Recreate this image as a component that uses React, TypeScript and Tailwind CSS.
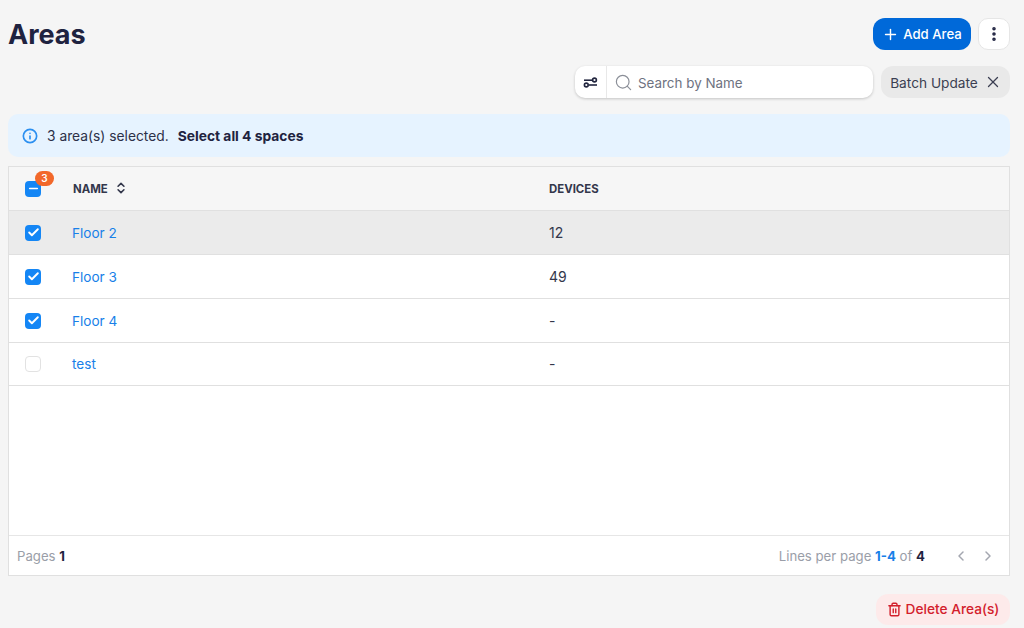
import { ChevronLeft, ChevronRight, ChevronsUpDown, Check, EllipsisVertical, Info, Minus, Plus, Search, Trash2, X } from 'lucide-react';

const rows = [
  { name: 'Floor 2', devices: '12', checked: true, hover: true, last: false },
  { name: 'Floor 3', devices: '49', checked: true, hover: false, last: false },
  { name: 'Floor 4', devices: '-', checked: true, hover: false, last: false },
  { name: 'test', devices: '-', checked: false, hover: false, last: true },
];

function Box({ checked }: { checked: boolean }) {
  if (!checked) {
    return <div className="w-4 h-4 rounded-[4px] border border-[#e2e2e2] bg-white" />;
  }
  return (
    <div className="w-4 h-4 rounded-[4px] bg-[#1486f5] flex items-center justify-center">
      <Check size={13} strokeWidth={3.5} className="text-white" />
    </div>
  );
}

function FilterIcon() {
  return (
    <svg width="15" height="15" viewBox="0 0 15 15" fill="none" stroke="#22263f" strokeWidth="1.6">
      <path d="M1 5.2h8" />
      <circle cx="11.5" cy="5" r="1.9" />
      <path d="M14 10h-8" />
      <circle cx="3.3" cy="10" r="1.9" />
    </svg>
  );
}

export default function App() {
  return (
    <div className="w-[1024px] h-[628px] overflow-hidden bg-[#f5f5f5] pl-2 pr-[14px] pt-[18px] font-['Inter',sans-serif] text-[#1f2340]">
      {/* Title row */}
      <div className="flex items-center justify-between h-8">
        <h1 className="text-[27px] font-bold leading-8 pt-[2px]">Areas</h1>
        <div className="flex items-center gap-[7px]">
          <button className="h-8 w-[98px] rounded-[12px] bg-[#0069d9] text-white text-[13.2px] font-medium flex items-center justify-center gap-[4px]">
            <Plus size={17} strokeWidth={2} />
            <span className="pt-[2px]">Add Area</span>
          </button>
          <button className="w-8 h-8 rounded-[10px] bg-white border border-[#e6e6e6] flex items-center justify-center">
            <EllipsisVertical size={18} strokeWidth={2.75} />
          </button>
        </div>
      </div>

      {/* Filters */}
      <div className="flex justify-end items-center gap-2 mt-4 h-8">
        <div className="flex h-8 w-[298px] rounded-[10px] bg-white shadow-[0_1px_3px_rgba(0,0,0,0.2)]">
          <div className="w-[32px] flex items-center justify-center border-r border-[#e8e8e8]">
            <FilterIcon />
          </div>
          <div className="flex flex-1 items-center gap-[5px] pl-[7px]">
            <Search size={19} strokeWidth={1.5} className="text-[#8b8f98]" />
            <span className="text-[13.4px] text-[#6e7280] pt-[2px]">Search by Name</span>
          </div>
        </div>
        <div className="h-8 w-[129px] pl-[1px] rounded-[12px] bg-[#e9e9e9] flex items-center justify-center gap-[6px] text-[13.7px] text-[#3b3f52]">
          <span className="pt-[2px]">Batch Update</span>
          <X size={18} strokeWidth={1.75} />
        </div>
      </div>

      {/* Selection banner */}
      <div className="flex items-center h-[43px] mt-4 pl-[14px] rounded-[10px] bg-[#e6f3ff] text-[13.8px]">
        <Info size={16} strokeWidth={2.5} className="text-[#2b8ff0]" />
        <span className="ml-[9px] pt-[2px] text-[#2c3048]">3 area(s) selected.</span>
        <span className="ml-[9px] pt-[2px] font-bold">Select all 4 spaces</span>
      </div>

      {/* Table */}
      <div className="mt-[9px] h-[410px] flex flex-col border border-[#e0e0e0] bg-white">
        <div className="flex items-center h-[44px] shrink-0 bg-[#f6f6f6] border-b border-[#e0e0e0] text-[11.4px] font-bold text-[#33374b]">
          <div className="relative w-[64px] pl-4">
            <div className="w-4 h-4 rounded-[4px] bg-[#1486f5] flex items-center justify-center">
              <Minus size={13} strokeWidth={3} className="text-white" />
            </div>
            <span className="absolute left-[26px] -top-[10px] w-[19px] h-[15px] rounded-full bg-[#f2682a] text-white text-[10px] leading-[15px] text-center font-semibold">3</span>
          </div>
          <div className="w-[476px] flex items-center gap-[6px]">
            <span className="pt-[2px]">NAME</span>
            <ChevronsUpDown size={14} strokeWidth={2.75} />
          </div>
          <div className="pt-[2px]">DEVICES</div>
        </div>
        {rows.map((r) => (
          <div key={r.name} className={`flex items-center shrink-0 border-b border-[#e0e0e0] text-sm ${r.last ? 'h-[43px]' : 'h-[44px]'} ${r.hover ? 'bg-[#ebebeb]' : 'bg-white'}`}>
            <div className="w-[63px] pl-4">
              <Box checked={r.checked} />
            </div>
            <div className="w-[477px] pt-[2px] text-[#1880e8] text-[13.6px]">{r.name}</div>
            <div className="text-[#33374b]">{r.devices}</div>
          </div>
        ))}
        <div className="flex-1" />
        <div className="flex items-center justify-between h-[40px] pt-[2px] shrink-0 border-t border-[#e6e6e6] pl-2 pr-[13px] text-[13.2px] text-[#9a9ea8]">
          <div>
            Pages <span className="font-bold text-[#1f2340]">1</span>
          </div>
          <div className="flex items-center">
            <span>
              Lines per page <span className="font-bold text-[#1880e8]">1-4</span> of <span className="font-bold text-[#1f2340]">4</span>
            </span>
            <ChevronLeft size={16} strokeWidth={2.25} className="ml-[28px] text-[#a4a7b0]" />
            <ChevronRight size={16} strokeWidth={2.25} className="ml-[11px] text-[#a4a7b0]" />
          </div>
        </div>
      </div>

      {/* Delete */}
      <div className="flex justify-end mt-[18px]">
        <button className="h-[31px] w-[134px] rounded-[12px] bg-[#fdeaea] text-[#d3202c] text-[13.7px] font-medium flex items-center justify-center gap-[4px]">
          <Trash2 size={15} strokeWidth={2.25} />
          Delete Area(s)
        </button>
      </div>
    </div>
  );
}
